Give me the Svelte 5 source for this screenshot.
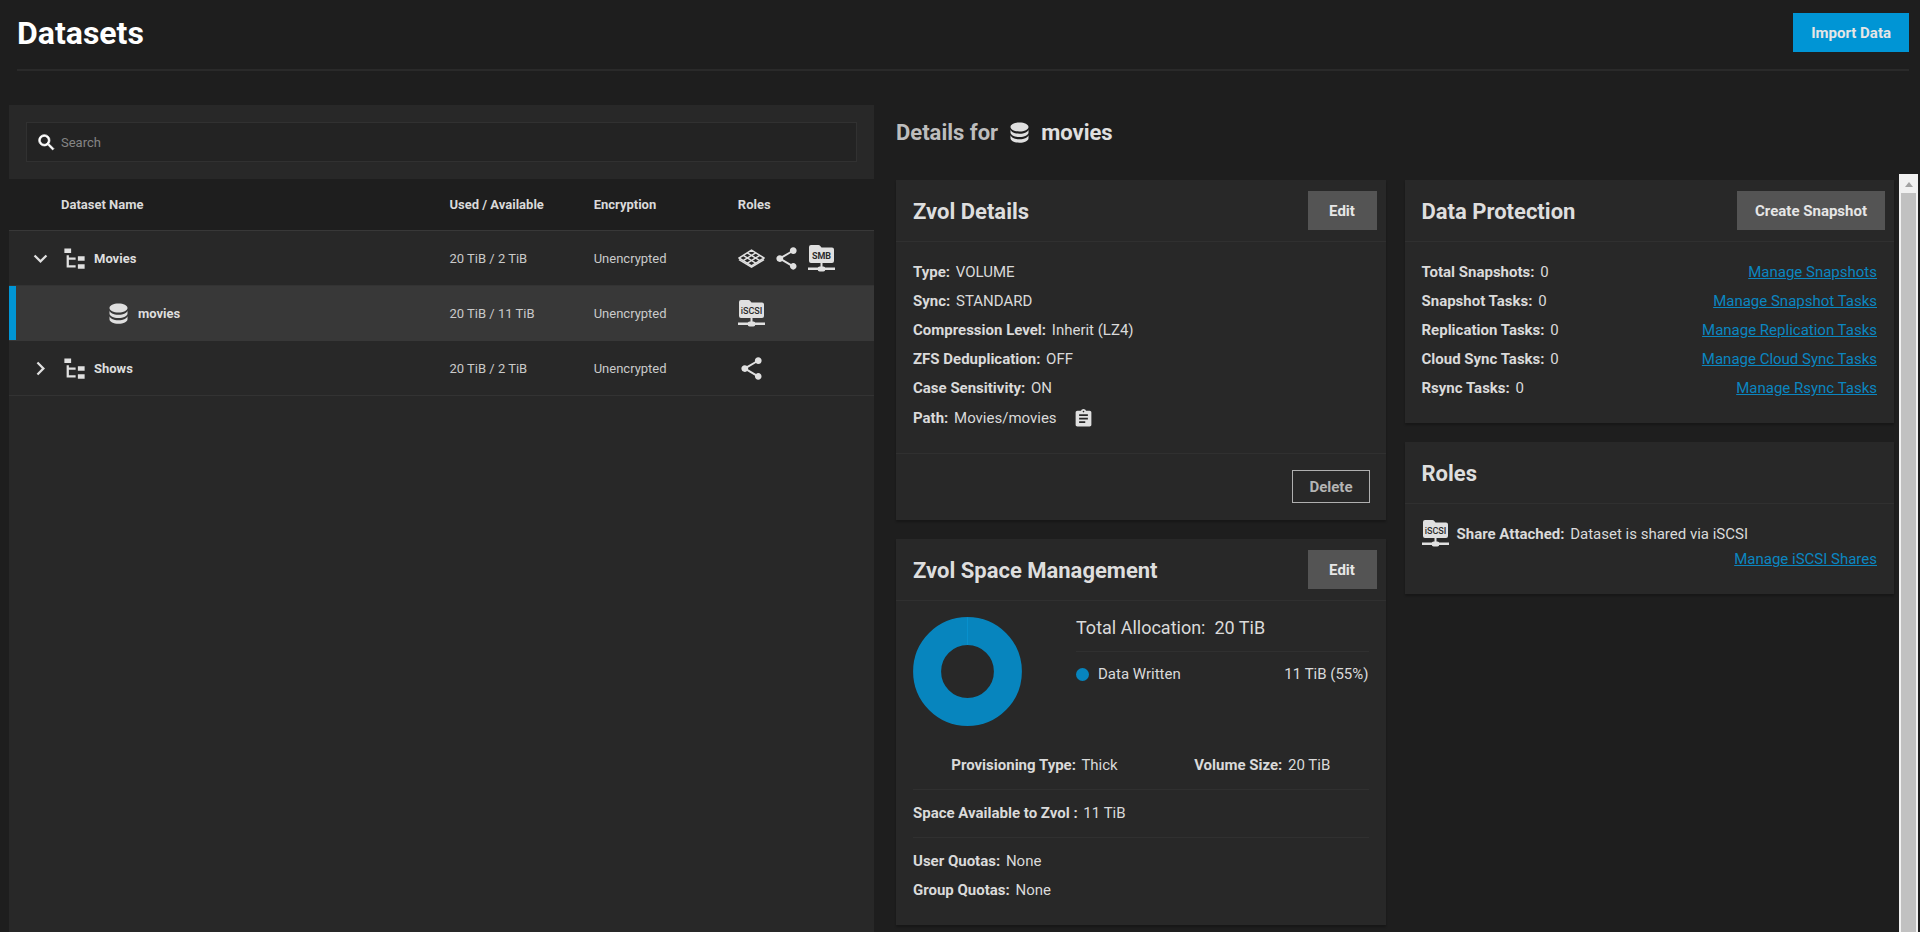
<script>
  let search = '';
  let selected = 'Movies/movies';

  const datasets = [
    { id: 'Movies', name: 'Movies', level: 0, open: true, used: '20 TiB / 2 TiB', encryption: 'Unencrypted', roles: ['pool', 'share', 'SMB'] },
    { id: 'Movies/movies', name: 'movies', level: 1, used: '20 TiB / 11 TiB', encryption: 'Unencrypted', roles: ['iSCSI'] },
    { id: 'Shows', name: 'Shows', level: 0, open: false, used: '20 TiB / 2 TiB', encryption: 'Unencrypted', roles: ['share'] },
  ];

  const details = [
    ['Type:', 'VOLUME'],
    ['Sync:', 'STANDARD'],
    ['Compression Level:', 'Inherit (LZ4)'],
    ['ZFS Deduplication:', 'OFF'],
    ['Case Sensitivity:', 'ON'],
  ];

  const protection = [
    ['Total Snapshots:', 0, 'Manage Snapshots'],
    ['Snapshot Tasks:', 0, 'Manage Snapshot Tasks'],
    ['Replication Tasks:', 0, 'Manage Replication Tasks'],
    ['Cloud Sync Tasks:', 0, 'Manage Cloud Sync Tasks'],
    ['Rsync Tasks:', 0, 'Manage Rsync Tasks'],
  ];

  const icons = {
    search: 'M15.5 14h-.79l-.28-.27A6.47 6.47 0 0 0 16 9.5 6.5 6.5 0 1 0 9.5 16c1.61 0 3.09-.59 4.23-1.57l.27.28v.79l5 4.99L20.49 19l-4.99-5zm-6 0C7.01 14 5 11.99 5 9.5S7.01 5 9.5 5 14 7.01 14 9.5 11.99 14 9.5 14z',
    down: 'M7.41 8.58 12 13.17l4.59-4.59L18 10l-6 6-6-6z',
    right: 'M8.58 16.59 13.17 12 8.58 7.41 10 6l6 6-6 6z',
    tree: 'M3 3h6v4H3V3m12 7h6v4h-6v-4m0 7h6v4h-6v-4m-2-4H7v5h6v2H5V9h2v2h6v2z',
    database: 'M12 3C7.58 3 4 4.79 4 7s3.58 4 8 4 8-1.79 8-4-3.58-4-8-4M4 9v3c0 2.21 3.58 4 8 4s8-1.79 8-4V9c0 2.21-3.58 4-8 4s-8-1.79-8-4m0 5v3c0 2.21 3.58 4 8 4s8-1.79 8-4v-3c0 2.21-3.58 4-8 4s-8-1.79-8-4z',
    share: 'M18 16.08c-.76 0-1.44.3-1.96.77L8.91 12.7c.05-.23.09-.46.09-.7s-.04-.47-.09-.7l7.05-4.11c.54.5 1.25.81 2.04.81 1.66 0 3-1.34 3-3s-1.34-3-3-3-3 1.34-3 3c0 .24.04.47.09.7L8.04 9.81C7.5 9.31 6.79 9 6 9c-1.66 0-3 1.34-3 3s1.34 3 3 3c.79 0 1.5-.31 2.04-.81l7.12 4.16c-.05.21-.08.43-.08.65 0 1.61 1.31 2.92 2.92 2.92s2.92-1.31 2.92-2.92-1.31-2.92-2.92-2.92z',
    clipboard: 'M19 3h-4.18C14.4 1.84 13.3 1 12 1s-2.4.84-2.82 2H5c-1.1 0-2 .9-2 2v14c0 1.1.9 2 2 2h14c1.1 0 2-.9 2-2V5c0-1.1-.9-2-2-2zm-7 0c.55 0 1 .45 1 1s-.45 1-1 1-1-.45-1-1 .45-1 1-1zm2 14H7v-2h7v2zm3-4H7v-2h10v2zm0-4H7V7h10v2z',
  };

  $: rows = datasets.filter((d) => d.id.toLowerCase().includes(search.toLowerCase()));
</script>

{#snippet icon(name, size = 27)}
  <svg class="icon {name}" width={size} height={size} viewBox="0 0 24 24" aria-hidden="true">
    <path d={icons[name]} />
  </svg>
{/snippet}

<!-- network folder with the protocol name on it -->
{#snippet folder(label)}
  <svg class="icon" width="27" height="27" viewBox="0 0 27 27" role="img" aria-label="{label} share">
    <path d="M3 0h7.5q.8 0 1.3.6L13.5 2.6H24q2 0 2 2V16q0 2-2 2H3q-2 0-2-2V2q0-2 2-2z" />
    <path d="M12.5 18h2v4h-2zM0 22.6h27v2.4H0z" />
    <rect x="9.7" y="21.6" width="7.6" height="5" rx="2" />
    <text class:thin={label === 'iSCSI'} x="13.5" y="13.6" text-anchor="middle">{label}</text>
  </svg>
{/snippet}

{#snippet role(name)}
  {#if name === 'pool'}
    <svg class="icon pool" width="27" height="27" viewBox="0 0 27 27" role="img" aria-label="Pool root">
      <path d="M13.5 5.2 26 13 13.5 20.8 1 13z" />
      <path d="M9.3 7.8 21.8 15.6M5.2 10.4l12.5 7.8M17.7 7.8 5.2 15.6M21.8 10.4 9.3 18.2" />
      <path d="M1 14.6 13.5 22.2 26 14.6" />
    </svg>
  {:else if name === 'share'}
    {@render icon('share')}
  {:else}
    {@render folder(name)}
  {/if}
{/snippet}

<div class="page">
  <header class="page-header">
    <h1>Datasets</h1>
    <button class="btn primary">Import Data</button>
  </header>

  <main>
    <section class="tree-panel">
      <div class="search-bar">
        <label class="search-box">
          {@render icon('search', 21)}
          <input type="text" placeholder="Search" aria-label="Search" bind:value={search} />
        </label>
      </div>

      <table>
        <colgroup>
          <col class="col-name" />
          <col />
          <col />
          <col />
        </colgroup>
        <thead>
          <tr>
            <th class="name-head">Dataset Name</th>
            <th>Used / Available</th>
            <th>Encryption</th>
            <th>Roles</th>
          </tr>
        </thead>
        <tbody>
          {#each rows as row (row.id)}
            <tr class:selected={row.id === selected} on:click={() => (selected = row.id)}>
              <td class="name-cell">
                <div class="name" class:child={row.level > 0}>
                  {#if row.level === 0}
                    <button class="toggle" aria-label="Toggle {row.name}">
                      {@render icon(row.open ? 'down' : 'right')}
                    </button>
                    {@render icon('tree')}
                  {:else}
                    {@render icon('database')}
                  {/if}
                  <span>{row.name}</span>
                </div>
              </td>
              <td>{row.used}</td>
              <td>{row.encryption}</td>
              <td>
                <div class="roles">
                  {#each row.roles as name}
                    {@render role(name)}
                  {/each}
                </div>
              </td>
            </tr>
          {/each}
        </tbody>
      </table>
    </section>

    <section class="details">
      <h2 class="details-title">
        <span class="prefix">Details for</span>
        {@render icon('database')}
        <span>movies</span>
      </h2>

      <div class="scroll-area">
        <div class="cards">
          <div class="column">
            <article class="card">
              <div class="card-header">
                <h3>Zvol Details</h3>
                <button class="btn">Edit</button>
              </div>
              <div class="card-body">
                {#each details as [label, value]}
                  <div class="item"><b>{label}</b> {value}</div>
                {/each}
                <div class="item path">
                  <span><b>Path:</b> Movies/movies</span>
                  <button class="copy" aria-label="Copy path">{@render icon('clipboard', 21)}</button>
                </div>
              </div>
              <div class="card-footer">
                <button class="btn outline">Delete</button>
              </div>
            </article>

            <article class="card">
              <div class="card-header">
                <h3>Zvol Space Management</h3>
                <button class="btn">Edit</button>
              </div>
              <div class="card-body">
                <div class="chart-row">
                  <svg class="donut" width="109" height="109" viewBox="0 0 109 109" role="img" aria-label="Space usage">
                    <circle cx="54.5" cy="54.5" r="40.4" />
                    <path d="M54.5 0.5v27.5" />
                  </svg>
                  <div class="legend">
                    <div class="total"><span>Total Allocation:</span><span>20 TiB</span></div>
                    <div class="legend-item">
                      <span class="dot"></span>
                      <span>Data Written</span>
                      <span class="amount">11 TiB (55%)</span>
                    </div>
                  </div>
                </div>
                <div class="group around">
                  <div class="item"><b>Provisioning Type:</b> Thick</div>
                  <div class="item"><b>Volume Size:</b> 20 TiB</div>
                </div>
                <div class="group">
                  <div class="item"><b>Space Available to Zvol :</b> 11 TiB</div>
                </div>
                <div class="group">
                  <div class="item"><b>User Quotas:</b> None</div>
                  <div class="item"><b>Group Quotas:</b> None</div>
                </div>
              </div>
            </article>
          </div>

          <div class="column">
            <article class="card">
              <div class="card-header">
                <h3>Data Protection</h3>
                <button class="btn">Create Snapshot</button>
              </div>
              <div class="card-body">
                {#each protection as [label, count, link]}
                  <div class="item between">
                    <span><b>{label}</b> {count}</span>
                    <a href="#manage">{link}</a>
                  </div>
                {/each}
              </div>
            </article>

            <article class="card">
              <div class="card-header">
                <h3>Roles</h3>
              </div>
              <div class="card-body">
                <div class="attached">
                  {@render folder('iSCSI')}
                  <span><b>Share Attached:</b> Dataset is shared via iSCSI</span>
                </div>
                <div class="attached-link"><a href="#shares">Manage iSCSI Shares</a></div>
              </div>
            </article>
          </div>
        </div>

        <div class="scrollbar" aria-hidden="true">
          <div class="scroll-up"></div>
          <div class="thumb"></div>
        </div>
      </div>
    </section>
  </main>
</div>

<style>
  :global(body) {
    background: #1e1e1e;
  }

  .page {
    --panel: #282828;
    --line: #303030;
    --primary: #0095d5;
    display: flex;
    flex-direction: column;
    height: 100vh;
    overflow: hidden;
    background: #1e1e1e;
    color: #dadada;
    font-family: Roboto, "Liberation Sans", sans-serif;
    font-size: 15px;
  }

  h1, h2, h3 {
    margin: 0;
    font-weight: 700;
  }

  .icon {
    display: block;
    flex: none;
    fill: #e0e0e0;
  }

  .icon text {
    fill: #2b2b2b;
    font-size: 9px;
    font-weight: 700;
  }

  .icon text.thin {
    font-weight: 500;
  }

  .icon.search {
    fill: #fff;
    stroke: #fff;
    stroke-width: 0.8;
  }

  .pool {
    fill: none;
    stroke: #e0e0e0;
    stroke-width: 1.5;
  }

  .page-header {
    display: flex;
    align-items: center;
    justify-content: space-between;
    margin: 0 11px 34px 17px;
    padding: 13px 0 17px;
    border-bottom: 2px solid #2a2a2a;
  }

  h1 {
    padding-top: 2px;
    color: #fff;
    font-size: 32px;
    line-height: 37px;
  }

  .btn {
    min-width: 69px;
    height: 39px;
    padding: 0 17px;
    border: 1px solid #545454;
    background: #545454;
    color: #e6e6e6;
    font: inherit;
    font-weight: 700;
    cursor: pointer;
  }

  .btn.primary {
    border-color: var(--primary);
    background: var(--primary);
  }

  .btn.outline {
    height: 33px;
    padding: 0 16px;
    border-color: #b0b0b0;
    background: transparent;
    color: #b4b4b4;
  }

  main {
    display: flex;
    flex: 1;
    gap: 22px;
    min-height: 0;
    padding: 0 2px 0 9px;
  }

  .tree-panel {
    flex: none;
    width: calc(45vw + 1px);
    background: var(--panel);
    font-size: 13px;
  }

  .search-bar {
    padding: 17px;
  }

  .search-box {
    display: flex;
    align-items: center;
    height: 38px;
    padding-left: 9px;
    border: 1px solid #313131;
    background: #232323;
  }

  .search-box input {
    flex: 1;
    margin-left: 4px;
    padding: 0;
    border: none;
    outline: none;
    background: transparent;
    color: #dadada;
    font: inherit;
  }

  .search-box input::placeholder {
    color: #858585;
    opacity: 1;
  }

  table {
    width: 100%;
    table-layout: fixed;
    border-spacing: 0;
  }

  .col-name {
    width: 50%;
  }

  th {
    height: 51px;
    padding: 0 8px;
    border-bottom: 1px solid #383838;
    background: #1e1e1e;
    text-align: left;
    font-weight: 700;
  }

  th.name-head {
    padding-left: 52px;
  }

  td {
    height: 54px;
    padding: 0 8px;
    border-bottom: 1px solid #333;
    color: #cacaca;
  }

  td.name-cell {
    padding-left: 18px;
  }

  .selected td {
    background: #383838;
    border-color: #383838;
  }

  .selected .name-cell {
    box-shadow: inset 7px 0 var(--primary);
  }

  .name {
    display: flex;
    align-items: center;
    color: #dedede;
    font-weight: 700;
  }

  .name.child {
    padding-left: 78px;
  }

  .name span {
    margin-left: 6px;
  }

  .toggle {
    margin-right: 7px;
    padding: 0;
    border: none;
    background: none;
    cursor: pointer;
  }

  .roles {
    display: flex;
    gap: 8px;
  }

  .details {
    display: flex;
    flex: 1;
    flex-direction: column;
    min-width: 0;
  }

  .details-title {
    display: flex;
    align-items: center;
    gap: 8px;
    height: 54px;
    margin-bottom: 15px;
    color: #e0e0e0;
    font-size: 22px;
  }

  .prefix {
    color: #bdbdbd;
  }

  .scroll-area {
    display: flex;
    flex: 1;
    gap: 5px;
    min-height: 0;
  }

  .cards {
    display: grid;
    flex: 1;
    grid-template-columns: 1fr 1fr;
    gap: 19px;
    padding-top: 6px;
  }

  .column {
    display: flex;
    flex-direction: column;
    gap: 19px;
  }

  .card {
    background: var(--panel);
    box-shadow: 0 2px 2px rgba(0, 0, 0, 0.25);
  }

  .card-header {
    display: flex;
    align-items: center;
    justify-content: space-between;
    height: 61px;
    padding: 0 9px 0 17px;
    border-bottom: 1px solid var(--line);
  }

  h3 {
    padding-top: 2px;
    color: #dedede;
    font-size: 22px;
  }

  .card-body {
    padding: 16px 17px 20px;
  }

  .item {
    line-height: 29px;
  }

  b {
    margin-right: 2px;
  }

  .path {
    display: flex;
    align-items: center;
    gap: 16px;
    min-height: 30px;
  }

  .copy {
    padding: 0;
    border: none;
    background: none;
    cursor: pointer;
  }

  .card-footer {
    display: flex;
    justify-content: flex-end;
    padding: 16px 16px 17px;
    border-top: 1px solid var(--line);
  }

  .chart-row {
    display: flex;
    gap: 54px;
    margin-bottom: 25px;
  }

  .donut {
    flex: none;
    fill: none;
    stroke: #0785be;
    stroke-width: 28;
  }

  .donut path {
    stroke: #0890cd;
    stroke-width: 1;
  }

  .legend {
    flex: 1;
  }

  .total {
    display: flex;
    gap: 9px;
    margin-bottom: 12px;
    padding-bottom: 12px;
    border-bottom: 1px solid var(--line);
    font-size: 18px;
    line-height: 22px;
  }

  .legend-item {
    display: flex;
    align-items: center;
    line-height: 20px;
  }

  .dot {
    width: 13px;
    height: 13px;
    margin-right: 9px;
    border-radius: 50%;
    background: #0785be;
  }

  .amount {
    margin-left: auto;
  }

  .group {
    padding: 9px 0;
    border-bottom: 1px solid var(--line);
  }

  .group:last-child {
    padding-bottom: 0;
    border-bottom: none;
  }

  .around {
    display: flex;
    justify-content: space-around;
    padding-top: 0;
  }

  .between {
    display: flex;
    justify-content: space-between;
  }

  a {
    color: #0b86c0;
    text-decoration: underline;
  }

  .attached {
    display: flex;
    align-items: center;
    gap: 8px;
  }

  .attached-link {
    padding-bottom: 3px;
    line-height: 24px;
    text-align: right;
  }

  .scrollbar {
    display: flex;
    flex-direction: column;
    width: 19px;
    background: #f1f1f1;
  }

  .scroll-up {
    width: 0;
    margin: 8px auto 6px;
    border: 4px solid transparent;
    border-top: none;
    border-bottom: 5px solid #a3a3a3;
  }

  .thumb {
    flex: 1;
    margin: 0 2px;
    background: #c1c1c1;
  }
</style>
